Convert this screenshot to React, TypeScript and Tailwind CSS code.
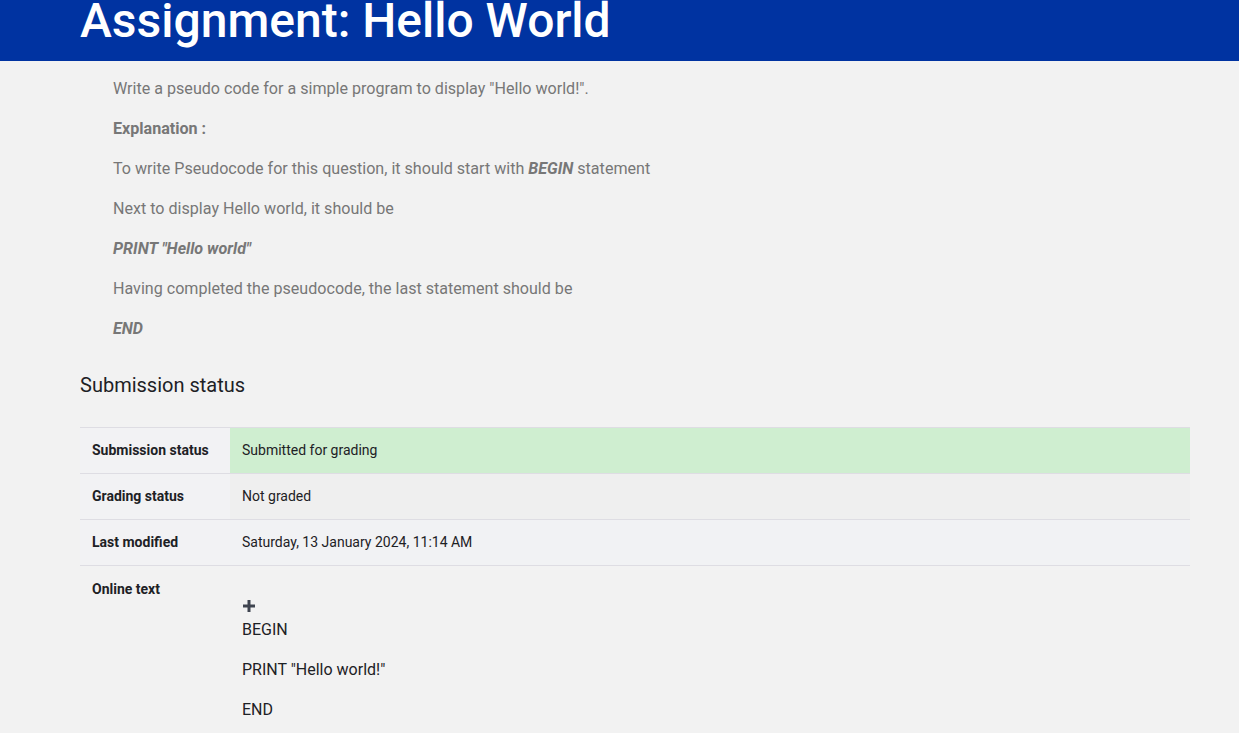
import React from 'react'

const font = { fontFamily: 'Roboto, "Noto Sans", sans-serif' }

function PlusIcon() {
  return (
    <svg width={14} height={14} viewBox="0 0 14 14" className="block">
      <path d="M5.5 1h3v4.5H13v3H8.5V13h-3V8.5H1v-3h4.5z" fill="#3f4450" />
    </svg>
  )
}

export default function App() {
  const rows = [
    { label: 'Submission status', value: 'Submitted for grading', cls: 'bg-[#cfeed0]' },
    { label: 'Grading status', value: 'Not graded', cls: 'bg-[#efefef]' },
    { label: 'Last modified', value: 'Saturday, 13 January 2024, 11:14 AM', cls: 'bg-[#f1f2f4]' },
  ]

  return (
    <div className="min-h-[733px] bg-[#f2f2f2]" style={font}>
      {/* Header */}
      <div className="h-[61px] bg-[#0033a1] pl-[80px] overflow-hidden">
        <h1 className="text-[48px] leading-[48px] font-medium text-white -mt-[3px]">Assignment: Hello World</h1>
      </div>

      {/* Intro */}
      <div className="pl-[113px] pt-[16px] text-[16.1px] leading-[24px] text-[#777777] flex flex-col gap-[16px]">
        <p>Write a pseudo code for a simple program to display "Hello world!".</p>
        <p className="font-bold">Explanation :</p>
        <p>
          To write Pseudocode for this question, it should start with <b><i>BEGIN</i></b> statement
        </p>
        <p>Next to display Hello world, it should be</p>
        <p className="font-bold italic">PRINT "Hello world"</p>
        <p>Having completed the pseudocode, the last statement should be</p>
        <p className="font-bold italic">END</p>
      </div>

      {/* Submission status */}
      <div className="px-[80px] pr-[49px]">
        <h3 className="mt-[32px] text-[20px] leading-[24px] text-[#1d2125]">Submission status</h3>
        <div className="mt-[30px] border-t border-[#dedde3] text-[14px] text-[#1d2125]">
          {rows.map(r => (
            <div key={r.label} className="flex border-b border-[#dedde3]">
              <div className="w-[150px] shrink-0 bg-[#f2f2f4] px-[12px] h-[45px] flex items-center font-bold">{r.label}</div>
              <div className={`flex-1 ${r.cls} px-[12px] h-[45px] flex items-center`}>{r.value}</div>
            </div>
          ))}
          <div className="flex">
            <div className="w-[150px] shrink-0 px-[12px] pt-[13px] font-bold">Online text</div>
            <div className="flex-1 px-[12px] pt-[33px]">
              <PlusIcon />
              <div className="mt-[5px] text-[16px] leading-[24px] flex flex-col gap-[16px]">
                <p>BEGIN</p>
                <p>PRINT "Hello world!"</p>
                <p>END</p>
              </div>
            </div>
          </div>
        </div>
      </div>
    </div>
  )
}
